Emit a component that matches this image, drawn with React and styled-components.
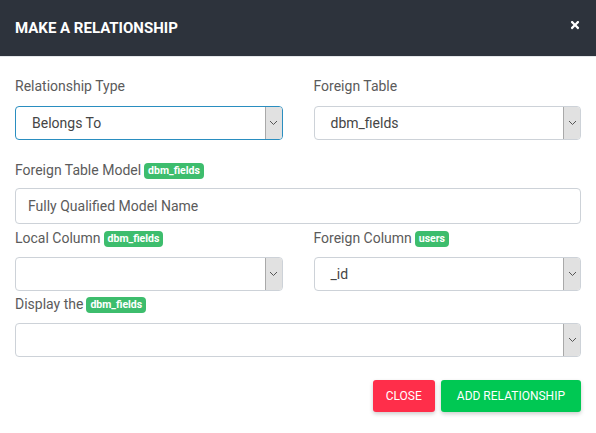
import React from 'react'
import styled, { createGlobalStyle } from 'styled-components'
import { FaTimes } from 'react-icons/fa'

const GlobalStyle = createGlobalStyle`
  html, body {
    margin: 0;
    padding: 0;
    background: #fff;
    font-family: Roboto, "Liberation Sans", Arial, sans-serif;
  }
`

const Modal = styled.div`
  width: 596px;
  height: 433px;
  background: #fff;
  display: flex;
  flex-direction: column;
`

const Header = styled.div`
  height: 57px;
  flex: none;
  background: #2d333c;
  border-bottom: 1px solid #e4e7ea;
  display: flex;
  align-items: center;
  justify-content: space-between;
  padding: 0 15px;
  box-sizing: border-box;
`

const Title = styled.h4`
  margin: 0;
  color: #fff;
  font-size: 15px;
  font-weight: 700;
  padding-bottom: 1px;
`

const CloseIcon = styled.button`
  border: 0;
  background: none;
  color: #fff;
  padding: 0;
  display: flex;
  margin-right: 0;
  margin-top: -6px;
`

const Body = styled.div`
  padding: 19px 15px 0;
  display: flex;
  flex-direction: column;
`

const Row = styled.div`
  display: grid;
  grid-template-columns: 1fr 1fr;
  column-gap: 31px;
  margin-bottom: ${p => p.$mb || 0}px;
`

const Field = styled.div`
  display: flex;
  flex-direction: column;
  margin-bottom: ${p => p.$mb || 0}px;
`

const Label = styled.label`
  display: flex;
  align-items: center;
  gap: 3px;
  font-size: 14px;
  line-height: 20px;
  color: #5b5b5b;
  margin-bottom: ${p => p.$gap || 10}px;
`

const Badge = styled.span`
  display: inline-block;
  background: #3dbd6d;
  color: #fff;
  font-size: 10.5px;
  font-weight: 700;
  line-height: 16px;
  padding: 0 4px;
  border-radius: 4px;
  margin-top: 1px;
`

const SelectBox = styled.div`
  height: 34px;
  box-sizing: border-box;
  border: 1px solid ${p => (p.$focused ? '#2a8ec0' : '#cdd2d8')};
  border-radius: 4px;
  display: flex;
  align-items: stretch;
  overflow: hidden;
  background: #fff;
`

const SelectValue = styled.span`
  flex: 1;
  display: flex;
  align-items: center;
  padding-left: 16px;
  font-size: 14px;
  color: #454545;
`

const Arrow = styled.span`
  width: 16px;
  flex: none;
  background: #e1e1e1;
  border-left: 1px solid #a9a9a9;
  display: flex;
  align-items: center;
  justify-content: center;
`

const TextInput = styled.input`
  height: 36px;
  box-sizing: border-box;
  border: 1px solid #cdd2d8;
  border-radius: 4px;
  padding: 0 12px;
  font-family: inherit;
  font-size: 14px;
  color: #454545;
  outline: none;

  &::placeholder {
    color: #5b5b5b;
  }
`

const Footer = styled.div`
  display: flex;
  justify-content: flex-end;
  gap: 6px;
  padding: 23px 15px 0;
`

const Button = styled.button`
  height: 32px;
  border: 0;
  border-radius: 3px;
  padding: 0 ${p => p.$px || 16}px;
  font-family: inherit;
  font-size: 12px;
  color: #fff;
  text-transform: uppercase;
  background: ${p => p.$bg};
  box-shadow: 0 2px 4px rgba(0, 0, 0, 0.2);
`

const Chevron = () => (
  <svg width="9" height="6" viewBox="0 0 9 6">
    <path d="M1 1l3.5 3.5L8 1" fill="none" stroke="#555" strokeWidth="1" />
  </svg>
)

const Select = ({ value, focused }) => (
  <SelectBox $focused={focused}>
    <SelectValue>{value}</SelectValue>
    <Arrow>
      <Chevron />
    </Arrow>
  </SelectBox>
)

export default function App() {
  return (
    <>
      <GlobalStyle />
      <Modal>
        <Header>
          <Title>MAKE A RELATIONSHIP</Title>
          <CloseIcon aria-label="close">
            <FaTimes size={12} />
          </CloseIcon>
        </Header>
        <Body>
          <Row $mb={20}>
            <Field>
              <Label>Relationship Type</Label>
              <Select value="Belongs To" focused />
            </Field>
            <Field>
              <Label>Foreign Table</Label>
              <Select value="dbm_fields" />
            </Field>
          </Row>
          <Field $mb={4}>
            <Label $gap={8}>
              Foreign Table Model <Badge>dbm_fields</Badge>
            </Label>
            <TextInput placeholder="Fully Qualified Model Name" />
          </Field>
          <Row $mb={3}>
            <Field>
              <Label $gap={9}>
                Local Column <Badge>dbm_fields</Badge>
              </Label>
              <Select value="" />
            </Field>
            <Field>
              <Label $gap={9}>
                Foreign Column <Badge>users</Badge>
              </Label>
              <Select value="_id" />
            </Field>
          </Row>
          <Field>
            <Label $gap={9}>
              Display the <Badge>dbm_fields</Badge>
            </Label>
            <Select value="" />
          </Field>
        </Body>
        <Footer>
          <Button $bg="#ff2e4a" $px={13}>Close</Button>
          <Button $bg="#00c853">Add Relationship</Button>
        </Footer>
      </Modal>
    </>
  )
}
